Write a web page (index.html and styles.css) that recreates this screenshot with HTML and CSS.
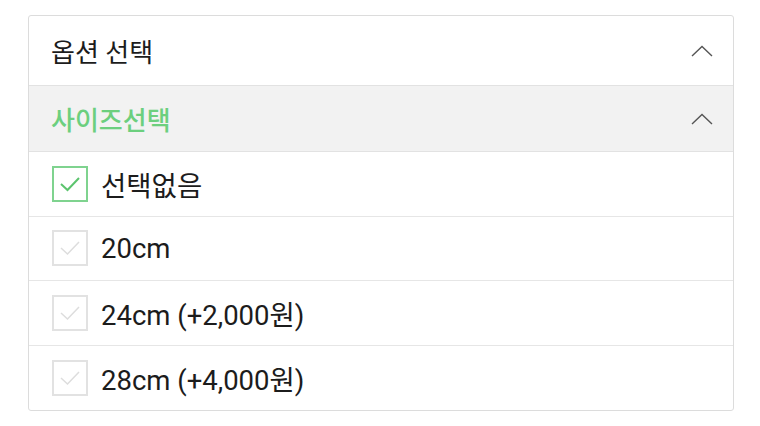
FILE: index.html
```html
<!DOCTYPE html>
<html lang="ko">
<head>
    <meta charset="UTF-8">
    <title>옵션 선택</title>
    <link rel="stylesheet" href="styles.css">
</head>
<body>
    <div class="option-panel">
        <div class="panel-head">
            <span class="panel-title">옵션 선택</span>
            <svg class="chevron" width="22" height="12" viewBox="0 0 22 12"><path d="M1 11 L11 1.5 L21 11" fill="none" stroke="#555" stroke-width="1.4"/></svg>
        </div>

        <div class="panel-head size-head">
            <span class="size-title">사이즈선택</span>
            <svg class="chevron" width="22" height="12" viewBox="0 0 22 12"><path d="M1 11 L11 1.5 L21 11" fill="none" stroke="#555" stroke-width="1.4"/></svg>
        </div>

        <!-- size list -->
        <ul class="size-list">
            <li class="size-item checked">
                <span class="check-box"><svg width="22" height="16" viewBox="0 0 22 16"><path d="M2 8 L8.5 14 L20 2" fill="none" stroke-width="2"/></svg></span>
                <span class="size-label">선택없음</span>
            </li>
            <li class="size-item">
                <span class="check-box"><svg width="22" height="16" viewBox="0 0 22 16"><path d="M2 8 L8.5 14 L20 2" fill="none" stroke-width="1.5"/></svg></span>
                <span class="size-label">20cm</span>
            </li>
            <li class="size-item">
                <span class="check-box"><svg width="22" height="16" viewBox="0 0 22 16"><path d="M2 8 L8.5 14 L20 2" fill="none" stroke-width="1.5"/></svg></span>
                <span class="size-label">24cm (+2,000원)</span>
            </li>
            <li class="size-item">
                <span class="check-box"><svg width="22" height="16" viewBox="0 0 22 16"><path d="M2 8 L8.5 14 L20 2" fill="none" stroke-width="1.5"/></svg></span>
                <span class="size-label">28cm (+4,000원)</span>
            </li>
        </ul>
    </div>
</body>
</html>
```

FILE: styles.css
```css
body {
    margin: 0;
    background-color: #ffffff;
    font-family: Roboto, "Noto Sans CJK KR", sans-serif;
    color: #1c1c1c;
}
.option-panel {
    margin: 15px 0 0 28px;
    width: 704px;
    border: 1px solid #dcdcdc;
    border-radius: 3px;
}
.panel-head {
    height: 69px;
    padding: 0 20px 0 22px;
    display: flex;
    align-items: center;
    justify-content: space-between;
    border-bottom: 1px solid #e2e2e2;
}
.panel-title {
    font-size: 26px;
}
.size-head {
    height: 65px;
    background-color: #f2f2f2;
}
.size-title {
    font-size: 26px;
    font-weight: 500;
    color: #6ccf7e;
}
.chevron {
    display: block;
}
.size-list {
    list-style: none;
    margin: 0;
    padding: 0;
}
.size-item {
    height: 63.5px;
    padding-left: 23px;
    display: flex;
    align-items: center;
    gap: 13px;
    border-bottom: 1px solid #e6e6e6;
}
.size-item:last-child {
    height: 64.5px;
    border-bottom: none;
}
.check-box {
    width: 32px;
    height: 32px;
    border: 2px solid #e2e2e2;
    display: flex;
    align-items: center;
    justify-content: center;
    stroke: #dddddd;
}
.size-item.checked .check-box {
    border-color: #7fd38f;
    stroke: #5cc46e;
}
.size-label {
    font-size: 27.5px;
}
```
